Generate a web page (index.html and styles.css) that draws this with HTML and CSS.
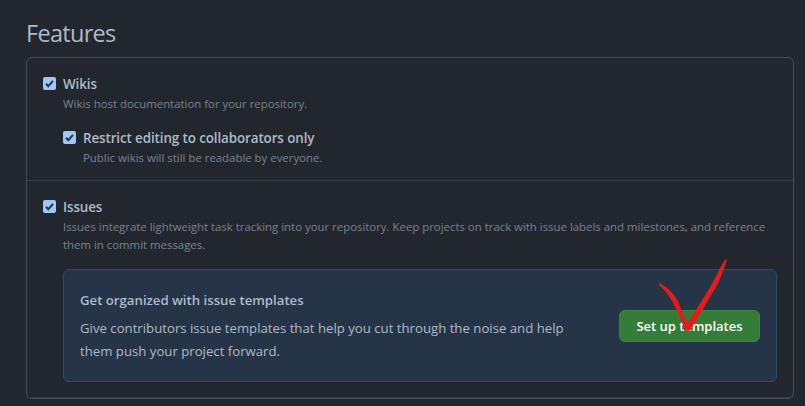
FILE: index.html
```html
<!DOCTYPE html>
<html lang="en">
<head>
<meta charset="utf-8">
<title>Features</title>
<link rel="stylesheet" href="styles.css">
</head>
<body>
<main class="page">
  <h2 class="title">Features</h2>
  <div class="box">
    <section class="row row-wikis">
      <div class="option">
        <svg class="check" viewBox="0 0 13 13"><rect width="13" height="13" rx="2" fill="#9fc7fb"/><path d="M3 6.8 5.3 9.2 10 3.8" fill="none" stroke="#2d333b" stroke-width="2"/></svg>
        <div>
          <div class="label">Wikis</div>
          <div class="note">Wikis host documentation for your repository.</div>
        </div>
      </div>
      <div class="option nested">
        <svg class="check" viewBox="0 0 13 13"><rect width="13" height="13" rx="2" fill="#9fc7fb"/><path d="M3 6.8 5.3 9.2 10 3.8" fill="none" stroke="#2d333b" stroke-width="2"/></svg>
        <div>
          <div class="label">Restrict editing to collaborators only</div>
          <div class="note">Public wikis will still be readable by everyone.</div>
        </div>
      </div>
    </section>
    <section class="row row-issues">
      <div class="option">
        <svg class="check" viewBox="0 0 13 13"><rect width="13" height="13" rx="2" fill="#9fc7fb"/><path d="M3 6.8 5.3 9.2 10 3.8" fill="none" stroke="#2d333b" stroke-width="2"/></svg>
        <div class="grow">
          <div class="label">Issues</div>
          <div class="note">Issues integrate lightweight task tracking into your repository. Keep projects on track with issue labels and milestones, and reference them in commit messages.</div>
          <div class="callout">
            <div class="callout-text">
              <div class="callout-title">Get organized with issue templates</div>
              <p class="callout-body">Give contributors issue templates that help you cut through the noise and help them push your project forward.</p>
            </div>
            <button class="btn" type="button">Set up templates</button>
          </div>
        </div>
      </div>
    </section>
  </div>
</main>
<svg class="ink" viewBox="0 0 805 406" aria-hidden="true"><path d="M660 284 C668 289 674 294 679 306 C682 314 685 321 687 325 C695 312 706 297 714 282 C719 272 722 265 726 260 C723 270 720 278 715 287 C707 301 698 316 689 330 L686 330 C683 323 680 315 676 307 C672 298 667 291 660 285Z" fill="#e81a1a" stroke="#e81a1a" stroke-width="1.6" stroke-linejoin="round"/></svg>
</body>
</html>
```
FILE: styles.css
```css
* { box-sizing: border-box; }
html, body { margin: 0; height: 100%; overflow: hidden; background: #22272e; }
body { font-family: "Open Sans", "Noto Sans", sans-serif; color: #adbac7; }
.page { padding: 17px 11px 0 26px; }
.title { margin: 0 0 7px; font-size: 23.5px; line-height: 33px; font-weight: 400; letter-spacing: -0.7px; color: #adbac7; }
.box { border: 1px solid #444c56; border-radius: 6px; }
.row { padding: 19px 16px 16px; border-bottom: 1px solid #373e47; }
.row-wikis { height: 123px; }
.row-issues { height: 217px; }
.option { display: flex; gap: 7px; align-items: flex-start; }
.nested { margin: 18px 0 0 20px; }
.check { width: 13px; height: 13px; flex: none; }
.grow { flex: 1; min-width: 0; }
.label { font-size: 13.4px; line-height: 15px; font-weight: 600; letter-spacing: -0.1px; color: #adbac7; }
.note { margin-top: 3px; font-size: 11.4px; line-height: 18px; color: #768390; }
.callout { display: flex; align-items: center; justify-content: space-between; height: 113px; margin-top: 15px; padding: 0 16px; background: #263447; border: 1px solid #2f4a72; border-radius: 6px; }
.callout-text { width: 496px; }
.callout-title { margin-top: 3px; font-size: 13.2px; line-height: 18px; font-weight: 600; color: #adbac7; }
.callout-body { margin: 8px 0 0; font-size: 13.2px; line-height: 23px; color: #adbac7; }
.btn { width: 141px; height: 32px; padding: 0; background: #347d39; border: 1px solid #3c8541; border-radius: 6px; color: #fff; font: 600 13px/18px "Open Sans", "Noto Sans", sans-serif; }
.ink { position: absolute; left: 0; top: 0; width: 805px; height: 406px; pointer-events: none; }
```
